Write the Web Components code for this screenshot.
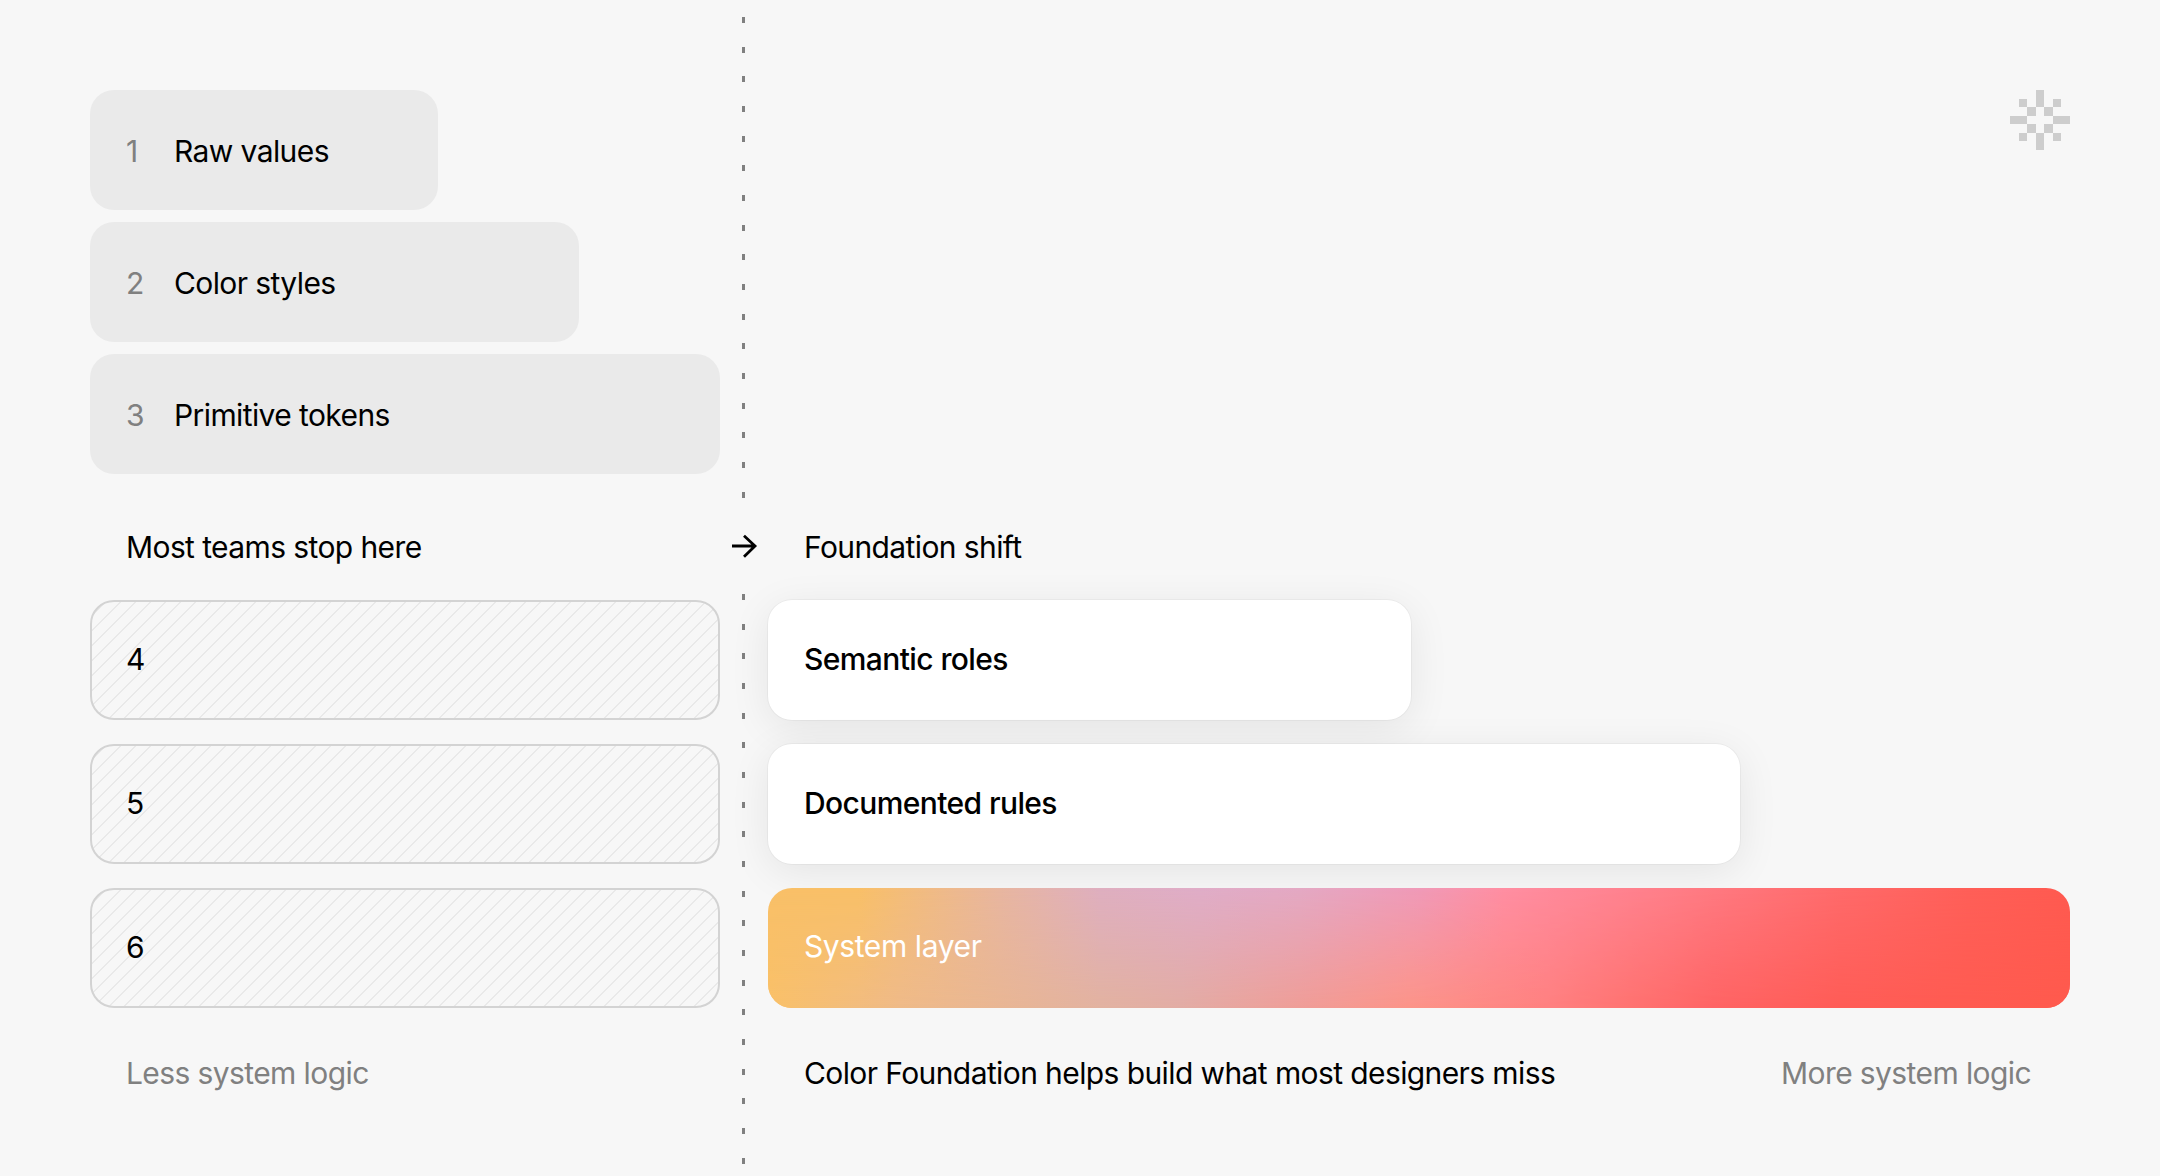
<!DOCTYPE html>
<html lang="en">
<head>
<meta charset="utf-8">
<title>Color Foundation</title>
<style>
  html, body { margin: 0; background: #f7f7f7; }
  body { font-family: Inter, "Liberation Sans", sans-serif; }
</style>
</head>
<body>
<foundation-board>
  <div slot="top">
    <level-card kind="muted" num="1" width="348px">Raw values</level-card>
    <level-card kind="muted" num="2" width="489px">Color styles</level-card>
    <level-card kind="muted" num="3" width="630px">Primitive tokens</level-card>
  </div>
  <brand-mark slot="mark"></brand-mark>
  <span slot="label-left">Most teams stop here</span>
  <span slot="label-right">Foundation shift</span>
  <div slot="left">
    <level-card kind="hatch" num="4" width="630px"></level-card>
    <level-card kind="hatch" num="5" width="630px"></level-card>
    <level-card kind="hatch" num="6" width="630px"></level-card>
  </div>
  <div slot="right">
    <level-card kind="white" width="643px">Semantic roles</level-card>
    <level-card kind="white" width="972px">Documented rules</level-card>
    <level-card kind="system" width="1302px">System layer</level-card>
  </div>
  <span slot="foot-left">Less system logic</span>
  <span slot="foot-mid">Color Foundation helps build what most designers miss</span>
  <span slot="foot-right">More system logic</span>
</foundation-board>

<script>
class LevelCard extends HTMLElement {
  connectedCallback() {
    this.attachShadow({ mode: 'open' });
    const num = this.getAttribute('num');
    this.shadowRoot.innerHTML = `
      <style>
        :host {
          display: flex;
          align-items: center;
          box-sizing: border-box;
          height: 120px;
          padding: 0 36px 2px;
          border-radius: 24px;
          font-size: 30px;
          line-height: 36px;
          letter-spacing: -0.6px;
          color: #000;
          width: ${this.getAttribute('width')};
        }
        :host([kind="muted"]) { background: #eaeaea; padding: 2px 36px 0; }
        :host([kind="hatch"]) {
          padding: 0 34px 2px;
          border: 2px solid #d3d3d3;
          background: repeating-linear-gradient(135deg, #f7f7f7 0 9.1px, #e9e9e9 9.1px 10.6px);
        }
        :host([kind="white"]) {
          background: #fff;
          font-weight: 500;
          box-shadow: 0 0 0 1px rgba(0,0,0,.035), 0 8px 40px rgba(0,0,0,.08);
        }
        :host([kind="system"]) {
          position: relative;
          isolation: isolate;
          color: #fff;
          overflow: hidden;
          padding-bottom: 4px;
          letter-spacing: -0.4px;
          background: linear-gradient(90deg,
            #f9c068 0, #f9c068 90px, #e8b6a0 232px, #dfafc0 332px, #e0adc8 432px, #e4a9c4 532px,
            #f09ab8 652px, #ff8ea2 736px, #ff7e88 904px, #ff6a6a 1073px, #ff5f58 1200px, #ff5a50 1302px);
        }
        /* lower edge of the bar has its own colour run, faded in top to bottom */
        :host([kind="system"])::before {
          content: "";
          position: absolute;
          inset: 0;
          z-index: -1;
          background: linear-gradient(90deg,
            #f9c068 0, #efba88 132px, #e2b2a0 332px, #e2aca4 413px, #f09c96 539px,
            #fc9488 640px, #ff8080 778px, #ff7270 862px, #ff6464 946px, #ff5c56 1073px, #ff5a4d 1302px);
          -webkit-mask-image: linear-gradient(180deg, transparent, #000);
          mask-image: linear-gradient(180deg, transparent, #000);
        }
        .num { width: 48px; flex: none; color: #808080; }
        :host([kind="hatch"]) .num { color: #000; }
      </style>
      ${num ? `<span class="num">${num}</span>` : ''}
      <slot></slot>
    `;
  }
}
customElements.define('level-card', LevelCard);

class BrandMark extends HTMLElement {
  connectedCallback() {
    this.attachShadow({ mode: 'open' });
    this.shadowRoot.innerHTML = `
      <style>
        :host { display: block; width: 60px; height: 60px; }
        svg { display: block; fill: #cdcdcd; }
      </style>
      <svg width="60" height="60" viewBox="0 0 7 7" shape-rendering="crispEdges">
        <rect x="3" y="0" width="1" height="2"/>
        <rect x="3" y="5" width="1" height="2"/>
        <rect x="0" y="3" width="2" height="1"/>
        <rect x="5" y="3" width="2" height="1"/>
        <rect x="1" y="1" width="1" height="1"/>
        <rect x="5" y="1" width="1" height="1"/>
        <rect x="1" y="5" width="1" height="1"/>
        <rect x="5" y="5" width="1" height="1"/>
        <rect x="2" y="2" width="1" height="1"/>
        <rect x="4" y="2" width="1" height="1"/>
        <rect x="2" y="4" width="1" height="1"/>
        <rect x="4" y="4" width="1" height="1"/>
      </svg>
    `;
  }
}
customElements.define('brand-mark', BrandMark);

class FoundationBoard extends HTMLElement {
  connectedCallback() {
    this.attachShadow({ mode: 'open' });
    this.shadowRoot.innerHTML = `
      <style>
        :host {
          display: grid;
          box-sizing: border-box;
          width: 2160px;
          height: 1176px;
          padding: 0 90px;
          grid-template-columns: 630px 48px 1302px;
          grid-template-rows: 500px 94px 414px 168px;
          font-size: 30px;
          line-height: 36px;
          letter-spacing: -0.6px;
          color: #000;
          background: #f7f7f7;
          overflow: hidden;
        }
        .top { padding-top: 90px; }
        ::slotted([slot="top"]), ::slotted([slot="left"]), ::slotted([slot="right"]) {
          display: flex;
          flex-direction: column;
        }
        ::slotted([slot="top"]) { gap: 12px; }
        ::slotted([slot="left"]), ::slotted([slot="right"]) { gap: 24px; }
        .mark { display: flex; justify-content: flex-end; padding-top: 90px; }
        .dash {
          justify-self: center;
          width: 3px;
          margin-right: 1px;
          background: repeating-linear-gradient(180deg, #808080 0 6px, transparent 6px 29.67px);
        }
        .dash-top { grid-column: 2; grid-row: 1; margin-top: 17px; }
        .dash-bottom { grid-column: 2; grid-row: 3 / 5; margin-bottom: 11px; }
        .label { display: flex; align-items: center; padding-left: 36px; }
        .arrow { display: flex; align-items: center; justify-content: center; }
        .rows { padding-top: 6px; }
        .foot { display: flex; justify-content: space-between; padding: 47px 39px 0 36px; }
        .foot-l { padding: 47px 0 0 36px; color: #808080; }
        .foot ::slotted([slot="foot-right"]) { color: #808080; }
      </style>
      <div class="top"><slot name="top"></slot></div>
      <div class="dash dash-top"></div>
      <div class="mark"><slot name="mark"></slot></div>
      <div class="label"><slot name="label-left"></slot></div>
      <div class="arrow">
        <svg width="28" height="28" viewBox="0 0 28 28" fill="none" stroke="#000" stroke-width="2.8">
          <path d="M2 13H25M14 2.8L25 13L14 23.8"/>
        </svg>
      </div>
      <div class="label"><slot name="label-right"></slot></div>
      <div class="rows"><slot name="left"></slot></div>
      <div class="dash dash-bottom"></div>
      <div class="rows"><slot name="right"></slot></div>
      <div class="foot-l" style="grid-column:1;grid-row:4"><slot name="foot-left"></slot></div>
      <div class="foot" style="grid-column:3;grid-row:4"><slot name="foot-mid"></slot><slot name="foot-right"></slot></div>
    `;
  }
}
customElements.define('foundation-board', FoundationBoard);
</script>
</body>
</html>
